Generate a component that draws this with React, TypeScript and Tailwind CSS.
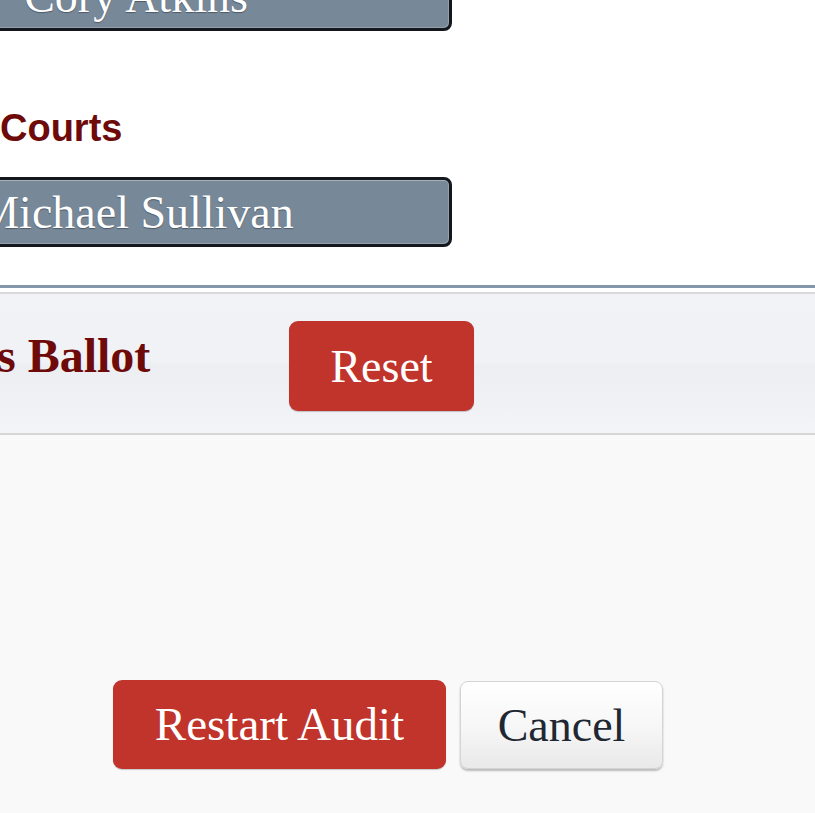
import React from 'react';

const serif = "font-['Liberation_Serif','Times_New_Roman',serif]";

function NameBox({ name, className = '' }: { name: string; className?: string }) {
  return (
    <div
      className={`-ml-[180px] flex h-[70px] w-[632px] items-center justify-center rounded-[8px] border-[3px] border-[#14181c] bg-[#778899] shadow-[inset_0_1px_0_rgba(255,255,255,0.35),inset_-1px_-1px_0_rgba(255,255,255,0.2)] ${className}`}
    >
      <span className={`${serif} text-[46px] text-white [text-shadow:0_1px_1px_rgba(0,0,0,0.35)]`}>{name}</span>
    </div>
  );
}

export default function App() {
  return (
    <div className="h-[813px] w-[815px] overflow-hidden bg-[#f9f9f9]">
      {/* candidate list */}
      <div className="h-[285px] overflow-hidden bg-white">
        <NameBox name="Cory Atkins" className="-mt-[39px]" />
        <h3 className="mt-[74px] font-['Liberation_Sans',Arial,sans-serif] text-[38px] leading-[46px] font-bold text-[#6e0a0a]">
          Courts
        </h3>
        <NameBox name="Michael Sullivan" className="mt-[26px]" />
      </div>

      {/* divider */}
      <div className="h-[3px] bg-[#8396aa]" />
      <div className="h-[4px] bg-white" />
      <div className="h-[2px] bg-[#d9d9d9]" />

      {/* ballot toolbar */}
      <div className="flex h-[139px] items-start bg-[linear-gradient(180deg,#f2f3f7_0%,#f1f2f6_48%,#eceef2_52%,#eef0f4_68%,#f3f4f7_100%)] pt-[27px]">
        <div className="-ml-[3px] w-[292px] shrink-0">
          <h2 className={`${serif} mt-[9px] text-[48px] leading-[52px] font-bold text-[#6e0a0a]`}>s Ballot</h2>
        </div>
        <button
          className={`${serif} h-[90px] w-[185px] rounded-[9px] bg-[#c0342b] text-[46px] leading-[51px] text-white shadow-[0_1px_1px_rgba(0,0,0,0.2)]`}
        >
          Reset
        </button>
      </div>
      <div className="h-[2px] bg-[#d6d6d6]" />

      {/* actions */}
      <div className="flex items-start gap-[14px] pt-[245px] pl-[113px]">
        <button
          className={`${serif} h-[89px] w-[333px] rounded-[9px] bg-[#c0342b] text-[47px] leading-[51px] text-white shadow-[0_1px_1px_rgba(0,0,0,0.2)]`}
        >
          Restart Audit
        </button>
        <button
          className={`${serif} mt-[1px] h-[88px] w-[203px] rounded-[8px] border border-[#d4d4d4] bg-[linear-gradient(180deg,#ffffff_0%,#f7f7f7_50%,#e9e9e9_100%)] text-[46px] leading-[51px] text-[#1f2733] shadow-[0_2px_2px_rgba(0,0,0,0.25)]`}
        >
          Cancel
        </button>
      </div>
    </div>
  );
}
